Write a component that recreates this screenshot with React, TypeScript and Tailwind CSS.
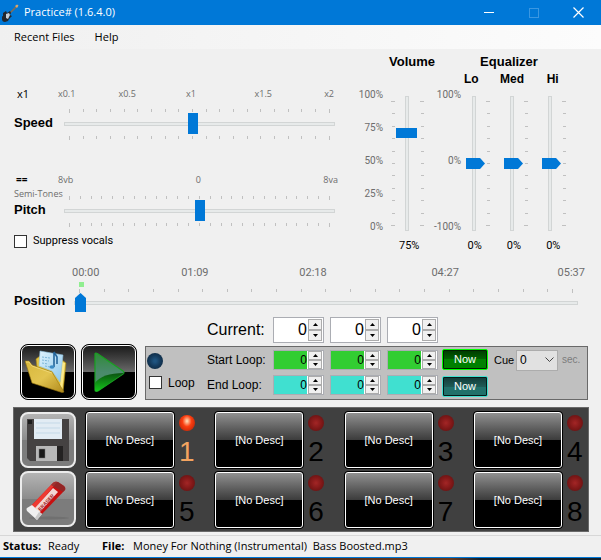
import { useState } from "react";
import type { ReactNode } from "react";

const railX =
  "block w-full appearance-none bg-transparent [&::-webkit-slider-runnable-track]:h-1 [&::-webkit-slider-runnable-track]:border [&::-webkit-slider-runnable-track]:border-[#d2d5d5] [&::-webkit-slider-runnable-track]:bg-[#e7eaea] [&::-webkit-slider-thumb]:appearance-none [&::-webkit-slider-thumb]:bg-[#0078d7]";

const railY =
  "block h-[135px] appearance-none bg-transparent [writing-mode:vertical-lr] [direction:rtl] [&::-webkit-slider-runnable-track]:w-1 [&::-webkit-slider-runnable-track]:border [&::-webkit-slider-runnable-track]:border-[#d2d5d5] [&::-webkit-slider-runnable-track]:bg-[#e7eaea] [&::-webkit-slider-thumb]:appearance-none [&::-webkit-slider-thumb]:bg-[#0078d7]";

function TicksX({ count }: { count: number }) {
  return (
    <div className="flex h-1 justify-between px-[5px]" aria-hidden="true">
      {Array.from({ length: count }, (_, i) => (
        <span key={i} className="h-[3px] w-px bg-[#c0c0c0] first:h-1 last:h-1" />
      ))}
    </div>
  );
}

function TicksY() {
  return (
    <div className="flex h-[135px] w-1 flex-col items-center justify-between py-[5px]" aria-hidden="true">
      {Array.from({ length: 11 }, (_, i) => (
        <span key={i} className="h-px w-[3px] bg-[#c0c0c0] first:w-1 last:w-1" />
      ))}
    </div>
  );
}

function SliderX(props: { id: string; min: number; max: number; step: number; value: number; ticks: number }) {
  return (
    <div className="min-w-0 flex-1">
      <TicksX count={props.ticks} />
      <input
        id={props.id}
        type="range"
        min={props.min}
        max={props.max}
        step={props.step}
        defaultValue={props.value}
        className={
          railX +
          " h-[21px] [&::-webkit-slider-thumb]:-mt-[10px] [&::-webkit-slider-thumb]:h-[21px] [&::-webkit-slider-thumb]:w-[10px]"
        }
      />
      <div className="mt-[2px]">
        <TicksX count={props.ticks} />
      </div>
    </div>
  );
}

function EqSlider({ label }: { label: string }) {
  return (
    <div className="flex w-[38px] gap-1">
      <input
        type="range"
        aria-label={label}
        min={-100}
        max={100}
        defaultValue={0}
        className={
          railY +
          " w-4 [&::-webkit-slider-thumb]:-ml-[7px] [&::-webkit-slider-thumb]:h-[11px] [&::-webkit-slider-thumb]:w-[19px] [&::-webkit-slider-thumb]:[clip-path:polygon(0_0,74%_0,100%_50%,74%_100%,0_100%)]"
        }
      />
      <TicksY />
    </div>
  );
}

function Arrow({ down }: { down?: boolean }) {
  return (
    <svg width="5" height="3" viewBox="0 0 5 3" className="block">
      <path d={down ? "M0 0h5L2.500 3z" : "M0 3h5L2.500 0z"} fill="#000" />
    </svg>
  );
}

function Spinner({ label, fill, big }: { label: string; fill: string; big?: boolean }) {
  const [value, setValue] = useState(0);
  const step = "flex min-h-0 flex-1 items-center justify-center border border-[#acacac] bg-[#f0f0f0]";
  return (
    <div className={"flex w-[51px] border border-[#abadb3] bg-white " + (big ? "h-[26px]" : "h-5")}>
      <input
        type="text"
        inputMode="numeric"
        aria-label={label}
        value={value}
        onChange={(e) => setValue(Number(e.target.value) || 0)}
        className={"mr-px min-w-0 flex-1 text-right outline-none " + fill + (big ? " text-base" : " text-xs")}
      />
      <div className={"flex w-[14px] flex-col " + (big ? "my-px mr-px" : "mr-px")}>
        <button type="button" aria-label={label + " up"} className={step} onClick={() => setValue(value + 1)}>
          <Arrow />
        </button>
        <button type="button" aria-label={label + " down"} className={step} onClick={() => setValue(Math.max(0, value - 1))}>
          <Arrow down />
        </button>
      </div>
    </div>
  );
}

function SpinnerGroup({ name, fill, big }: { name: string; fill: string; big?: boolean }) {
  return (
    <div className="flex gap-[6px]">
      <Spinner label={name + " minutes"} fill={fill} big={big} />
      <Spinner label={name + " seconds"} fill={fill} big={big} />
      <Spinner label={name + " milliseconds"} fill={fill} big={big} />
    </div>
  );
}

function DarkButton({ label, children }: { label: string; children: ReactNode }) {
  return (
    <button
      type="button"
      aria-label={label}
      className="h-14 w-14 rounded-[8px] border border-black bg-black"
    >
      <span className="flex h-full w-full items-center justify-center rounded-[7px] border border-white bg-linear-to-b from-[#1c1c1c] via-[#6a6a6a] via-50% to-black to-50%">
        {children}
      </span>
    </button>
  );
}

function GreyButton({ label, children }: { label: string; children: ReactNode }) {
  return (
    <button
      type="button"
      aria-label={label}
      className="flex h-14 w-14 items-center justify-center rounded-[8px] border-2 border-[#ececec] bg-linear-to-b from-[#b4b4b4] via-[#8c8c8c] via-50% to-[#7c7c7c] to-50%"
    >
      {children}
    </button>
  );
}

function Led({ color }: { color: "blue" | "red" | "dark" }) {
  const fill = {
    blue: "bg-radial from-[#1f5480] from-10% via-[#14395a] via-50% to-[#0c2236]",
    red: "bg-radial-[at_50%_38%] from-[#ffd0a8] from-5% via-[#fb3e10] via-40% to-[#a81c04]",
    dark: "bg-radial from-[#a02424] from-5% via-[#801818] via-50% to-[#581010]",
  }[color];
  return <span className={"block h-4 w-4 rounded-full " + fill} />;
}

function Pad({ n, active }: { n: number; active?: boolean }) {
  return (
    <div className="flex gap-1">
      <button type="button" className="h-[58px] w-[90px] rounded-[4px] border border-black bg-black text-[11px] text-white">
        <span className="flex h-full w-full items-center justify-center rounded-[3px] border border-white bg-linear-to-b from-[#919191] via-[#3c3c3c] via-50% to-black to-50%">
          [No Desc]
        </span>
      </button>
      <div className="w-4 pt-1">
        <Led color={active ? "red" : "dark"} />
        <div className={"mt-[7px] text-[28px] leading-[28px] " + (active ? "text-[#f4a460]" : "text-black")}>{n}</div>
      </div>
    </div>
  );
}

function NowButton({ tone, label }: { tone: string; label: string }) {
  return (
    <button
      type="button"
      aria-label={label}
      className={"h-[21px] w-[46px] rounded-[2px] border text-[11px] leading-none text-white " + tone}
    >
      Now
    </button>
  );
}

function FolderIcon() {
  return (
    <svg width="46" height="44" viewBox="0 0 46 44">
      <defs>
        <linearGradient id="fold" x1="0" y1="0" x2="1" y2="1">
          <stop offset="0" stopColor="#d8b83c" />
          <stop offset=".5" stopColor="#e2c450" />
          <stop offset="1" stopColor="#b08a1c" />
        </linearGradient>
        <linearGradient id="paper" x1="0" y1="0" x2="1" y2="1">
          <stop offset="0" stopColor="#dff2fc" />
          <stop offset="1" stopColor="#8cc8ec" />
        </linearGradient>
      </defs>
      <path d="M11 9l4-3 22 4 4 3-3 29-6-6L12 17z" fill="#e3c540" stroke="#a88616" strokeWidth=".6" />
      <path d="M37 12l3 1-3 28-2-3z" fill="#fbe98a" />
      <path d="M15 1l23 4-3 27-8-11-13-5z" fill="url(#paper)" stroke="#8fc0dc" strokeWidth=".6" />
      <path d="M17 7l8 1M17 10l7 1M17 13l6 1M20 16l5 1" stroke="#7db6d8" strokeWidth="1" strokeDasharray="2 1" />
      <path d="M29 2v15M29 2l3 5v7" fill="none" stroke="#24659a" strokeWidth="1.600" />
      <ellipse cx="27" cy="17" rx="2.500" ry="1.800" fill="#3c8cc4" />
      <path d="M0 11l4 0 3 4 20 7 12 20-2 .5L7 33z" fill="url(#fold)" stroke="#96730c" strokeWidth=".6" />
      <path d="M1 12l3 0 3 4 20 7" fill="none" stroke="#f2dc80" strokeWidth=".8" />
    </svg>
  );
}

function PlayIcon() {
  return (
    <svg width="34" height="42" viewBox="0 0 34 42">
      <defs>
        <linearGradient id="play" x1="0" y1="0" x2="0" y2="1">
          <stop offset="0" stopColor="#2f8a38" />
          <stop offset=".5" stopColor="#4a8a6c" />
          <stop offset="1" stopColor="#4a9460" />
        </linearGradient>
        <linearGradient id="shade" x1="0" y1="0" x2="0" y2="1">
          <stop offset="0" stopColor="#0a5210" />
          <stop offset="1" stopColor="#14c81a" />
        </linearGradient>
      </defs>
      <path d="M3 3q0-2 3 0l25 17q2 1.500 0 3L6 40q-3 1-3-1z" fill="url(#play)" stroke="#18a020" strokeWidth="1.200" />
      <path d="M3 32Q10 22 32 22L6 40q-3 1-3-1z" fill="url(#shade)" />
    </svg>
  );
}

function FloppyIcon() {
  return (
    <svg width="44" height="44" viewBox="0 0 44 44">
      <path d="M1 1h42v42H4l-3-3z" fill="#454242" />
      <path d="M2 2h4v4H2z" fill="#1c1c1c" />
      <rect x="8" y="1" width="28" height="20" fill="#e2ecf4" />
      <path d="M10 5h24M10 10h24M10 15h24" stroke="#c4d9e8" strokeWidth="1" />
      <rect x="10" y="28" width="21" height="15" fill="#b8b8b8" />
      <rect x="31" y="28" width="6" height="15" fill="#242222" />
      <rect x="13" y="31" width="6" height="9" fill="#1a1a1a" stroke="#777" strokeWidth=".5" />
    </svg>
  );
}

function EraserIcon() {
  return (
    <svg width="50" height="44" viewBox="0 0 50 44">
      <ellipse cx="26" cy="41" rx="20" ry="1.500" fill="#707070" />
      <path d="M7 30L30 6q2-2 5-1l6 4q2 2 1 4L18 38z" fill="#c81010" />
      <path d="M7 30L30 6q2-2 4-1L11 33z" fill="#ee3a32" />
      <path d="M28 8l2-2q2-2 5-1l6 4q2 2 1 4l-2 2z" fill="#7c3030" opacity=".7" />
      <path d="M12 31L30 11l5 4-19 21z" fill="#f3d6d4" />
      <text x="-12" y="2" transform="translate(24 24) rotate(-47)" fontSize="5" fontWeight="700" fill="#a02020">
        ERASER
      </text>
      <path d="M9 28l10 9-5 6-10-9q-1-2 0-3z" fill="#f0f0f0" />
      <path d="M16 35l3 2-5 6-2-2z" fill="#cacaca" />
    </svg>
  );
}

function GuitarIcon() {
  return (
    <svg width="18" height="18" viewBox="0 0 18 18">
      <path d="M8 9l7-7" stroke="#8c6c4c" strokeWidth="1.500" />
      <path d="M13 2l2-1.500 1.500 1L15 4z" fill="#d8a870" />
      <path d="M1 9l3-2 1 2 3-2 1 2-1 2 2 1-3 3-1 2-3 1q-3 0-3-3-1-2 1-3z" fill="#23272d" />
      <path d="M4 10l3-1 1 2-2 4-2-1z" fill="#c8d0d8" />
    </svg>
  );
}

const muted = "text-[#6d6d6d]";
const ui = "font-['Open_Sans','Noto_Sans',sans-serif]";
const small = "font-['Roboto','Liberation_Sans',sans-serif]";

export default function App() {
  return (
    <div className="flex min-h-screen flex-col bg-[#f0f0f0] font-['Liberation_Sans',Arial,sans-serif] text-xs text-black">
      <header className={"flex h-[25px] items-center bg-[#0078d7] pl-[2px] text-white " + ui}>
        <GuitarIcon />
        <h1 className="ml-1 flex-1 text-[11px]">Practice# (1.6.4.0)</h1>
        <button type="button" aria-label="Minimize" className="flex h-full w-[45px] items-center justify-center">
          <span className="h-px w-[10px] bg-white" />
        </button>
        <button type="button" aria-label="Maximize" disabled className="flex h-full w-[45px] items-center justify-center">
          <span className="h-[10px] w-[10px] border border-[#3a97e2]" />
        </button>
        <button type="button" aria-label="Close" className="flex h-full w-[45px] items-center justify-center">
          <svg width="11" height="11" viewBox="0 0 11 11">
            <path d="M.5.5l10 10M10.500.5l-10 10" stroke="#fff" strokeWidth="1.200" />
          </svg>
        </button>
      </header>

      <nav className={"flex h-6 items-center gap-5 bg-linear-to-r from-[#f0f0f0] to-[#fcfcfc] pl-[14px] text-[11px] " + ui}>
        <button type="button">Recent Files</button>
        <button type="button">Help</button>
      </nav>

      <main>
        <div className="flex">
          <section className="min-w-0 flex-1 pt-[38px] pl-[14px]">
            <div className="flex h-[14px] items-center pr-[17px]">
              <span className={"w-11 pl-[3px] text-[11px] " + ui}>x1</span>
              <div className={"grid flex-1 grid-cols-[60fr_67fr_68fr_69fr_auto] text-[9px] " + ui + " " + muted}>
                <span>x0.1</span>
                <span>x0.5</span>
                <span>x1</span>
                <span>x1.5</span>
                <span className="pr-1">x2</span>
              </div>
            </div>
            <div className="mt-2 flex pr-5">
              <label htmlFor="speed" className="w-[50px] pt-[6px] text-[13px] leading-4 font-bold">
                Speed
              </label>
              <SliderX id="speed" min={0.1} max={2} step={0.1} value={1} ticks={20} />
            </div>

            <div className="mt-[33px] flex h-[14px] items-center pr-[17px]">
              <span className={"w-11 pl-[2px] text-[10px] font-bold " + ui}>==</span>
              <div className={"grid flex-1 grid-cols-[137fr_127fr_auto] text-[9px] " + ui + " " + muted}>
                <span>8vb</span>
                <span>0</span>
                <span>8va</span>
              </div>
            </div>
            <div className="flex pt-px pr-5">
              <div className="w-[50px]">
                <div className={"text-[9px] leading-3 whitespace-nowrap " + ui + " " + muted}>Semi-Tones</div>
                <label htmlFor="pitch" className="mt-[2px] block text-[13px] leading-4 font-bold">
                  Pitch
                </label>
              </div>
              <div className="flex min-w-0 flex-1 pt-2">
                <SliderX id="pitch" min={-12} max={12} step={1} value={0} ticks={25} />
              </div>
            </div>

            <label className={"mt-[6px] flex h-4 items-center gap-[6px] text-[11px] " + small}>
              <input type="checkbox" className="h-[13px] w-[13px] appearance-none border border-[#333] bg-white checked:bg-[#0078d7]" />
              Suppress vocals
            </label>
          </section>

          <section className="w-20 pt-[5px]">
            <h2 className="text-right text-[13px] leading-4 font-bold">Volume</h2>
            <div className="mt-[26px] flex h-[135px]">
              <div className={"-mt-2 flex h-[146px] w-7 flex-col justify-between text-right text-[10px] leading-[14px] " + small + " " + muted}>
                <span>100%</span>
                <span>75%</span>
                <span>50%</span>
                <span>25%</span>
                <span>0%</span>
              </div>
              <div className="ml-2 flex gap-px">
                <TicksY />
                <input
                  type="range"
                  aria-label="Volume"
                  defaultValue={75}
                  className={
                    railY +
                    " mr-px w-[22px] [&::-webkit-slider-thumb]:-ml-[10px] [&::-webkit-slider-thumb]:h-[10px] [&::-webkit-slider-thumb]:w-[21px]"
                  }
                />
                <TicksY />
              </div>
            </div>
            <output className={"mt-2 block pl-11 text-[11px] leading-[14px] " + small}>75%</output>
          </section>

          <section className="w-[166px] pt-[5px]">
            <h2 className="w-[148px] text-center text-[13px] leading-4 font-bold">Equalizer</h2>
            <div className="grid w-[138px] grid-cols-3 pl-4 text-center text-xs leading-[18px] font-bold">
              <span>Lo</span>
              <span>Med</span>
              <span>Hi</span>
            </div>
            <div className="mt-2 flex h-[135px]">
              <div className={"-mt-2 mr-[5px] flex h-[146px] w-[26px] flex-col items-end justify-between text-[10px] leading-[14px] whitespace-nowrap " + small + " " + muted}>
                <span>100%</span>
                <span>0%</span>
                <span>-100%</span>
              </div>
              <EqSlider label="Lo" />
              <EqSlider label="Med" />
              <EqSlider label="Hi" />
            </div>
            <div className={"mt-2 grid w-[138px] grid-cols-3 pl-5 text-center text-[11px] leading-[14px] " + small}>
              <output>0%</output>
              <output>0%</output>
              <output>0%</output>
            </div>
          </section>
        </div>

        <section className="mt-[13px] pl-[14px]">
          <div className={"grid grid-cols-[109fr_118fr_132fr_126fr_auto] pr-4 pl-[58px] text-[11px] leading-[14px] " + small + " " + muted}>
            <span>00:00</span>
            <span>01:09</span>
            <span>02:18</span>
            <span>04:27</span>
            <span>05:37</span>
          </div>
          <div className="flex pr-[23px]">
            <label htmlFor="position" className="w-[60px] pt-[13px] text-[13px] leading-4 font-bold">
              Position
            </label>
            <div className="min-w-0 flex-1 pt-[2px]">
              <span className="mb-[2px] ml-[5px] block h-[5px] w-[5px] bg-[#90ee90]" />
              <TicksX count={21} />
              <input
                id="position"
                type="range"
                defaultValue={0}
                className={
                  railX +
                  " h-5 [&::-webkit-slider-thumb]:-mt-[9px] [&::-webkit-slider-thumb]:h-[19px] [&::-webkit-slider-thumb]:w-[11px] [&::-webkit-slider-thumb]:[clip-path:polygon(0_26%,50%_0,100%_26%,100%_100%,0_100%)]"
                }
              />
            </div>
          </div>
        </section>

        <section className="mt-1 flex items-end gap-2 pr-[13px] pl-5">
          <div className="flex gap-[5px]">
            <DarkButton label="Open file">
              <FolderIcon />
            </DarkButton>
            <DarkButton label="Play">
              <PlayIcon />
            </DarkButton>
          </div>
          <div className="min-w-0 flex-1">
            <div className="flex items-center pl-[62px]">
              <span className="w-[66px] text-base leading-6">Current:</span>
              <SpinnerGroup name="Current" fill="bg-white" big />
            </div>
            <div className="mt-[3px] flex h-[54px] border border-[#696969] bg-[#c0c0c0]">
              <div className="w-[61px] shrink-0 pt-[6px] pl-px">
                <Led color="blue" />
                <label className="mt-[6px] flex h-[15px] items-center gap-[6px] pl-[2px]">
                  <input type="checkbox" className="h-[13px] w-[13px] appearance-none border border-[#333] bg-white checked:bg-[#0078d7]" />
                  Loop
                </label>
              </div>
              <div className="flex flex-col gap-[5px] pt-[3px]">
                <div className="flex h-5 items-center">
                  <span className="w-[66px] leading-4">Start Loop:</span>
                  <SpinnerGroup name="Start loop" fill="bg-[#32cd32]" />
                </div>
                <div className="flex h-5 items-center">
                  <span className="w-[66px] leading-4">End Loop:</span>
                  <SpinnerGroup name="End loop" fill="bg-[#40e0d0]" />
                </div>
              </div>
              <div className="ml-1 flex flex-col gap-[6px] pt-[2px]">
                <NowButton
                  label="Set loop start now"
                  tone="border-[#00ff00] bg-linear-to-b from-[#003800] via-[#006400] via-50% to-[#008000] to-50% shadow-[inset_0_0_0_1px_#002000]"
                />
                <NowButton
                  label="Set loop end now"
                  tone="border-[#40e0d0] bg-linear-to-b from-[#123a38] via-[#1e5a55] via-50% to-[#20706a] to-50% shadow-[inset_0_0_0_1px_#041a18]"
                />
              </div>
              <div className="ml-[6px] flex h-[21px] items-center pt-[5px]">
                <label htmlFor="cue" className="w-[22px] text-[11px]">
                  Cue
                </label>
                <div className="grid">
                  <select
                    id="cue"
                    className="h-[21px] w-[42px] appearance-none border border-[#acacac] bg-[#e1e1e1] pl-[3px] text-xs outline-none [grid-area:1/1]"
                  >
                    <option>0</option>
                    <option>1</option>
                    <option>2</option>
                  </select>
                  <svg width="9" height="6" viewBox="0 0 9 6" className="pointer-events-none mr-1 self-center justify-self-end [grid-area:1/1]">
                    <path d="M.5.5l4 4 4-4" fill="none" stroke="#444" />
                  </svg>
                </div>
                <span className="ml-1 text-[10px] text-[#7c7c7c]">sec.</span>
              </div>
            </div>
          </div>
        </section>

        <section className="mt-[7px] mr-3 ml-[13px] flex gap-[9px] border border-[#696969] bg-[#404040] pt-[3px] pr-[5px] pb-[2px] pl-[6px]">
          <div className="flex flex-col gap-[3px] pt-px">
            <GreyButton label="Save preset">
              <FloppyIcon />
            </GreyButton>
            <GreyButton label="Erase preset">
              <EraserIcon />
            </GreyButton>
          </div>
          <div className="flex flex-1 flex-col gap-[2px]">
            <div className="flex justify-between">
              <Pad n={1} active />
              <Pad n={2} />
              <Pad n={3} />
              <Pad n={4} />
            </div>
            <div className="flex justify-between">
              <Pad n={5} />
              <Pad n={6} />
              <Pad n={7} />
              <Pad n={8} />
            </div>
          </div>
        </section>
      </main>

      <footer className="mt-[3px]">
        <div className={"flex h-[22px] items-center border-t border-[#d7d7d7] pl-[3px] text-[11px] whitespace-pre " + ui}>
          <span className="w-[45px] font-bold">Status:</span>
          <span className="w-[54px]">Ready</span>
          <span className="w-[31px] font-bold">File:</span>
          <span>{"Money For Nothing (Instrumental)  Bass Boosted.mp3"}</span>
        </div>
        <div className="h-[3px] border-t border-[#0078d7] bg-linear-to-r from-[#2a160c] via-[#6a3a1c] via-75% to-[#10202c] to-80%" />
      </footer>
    </div>
  );
}
